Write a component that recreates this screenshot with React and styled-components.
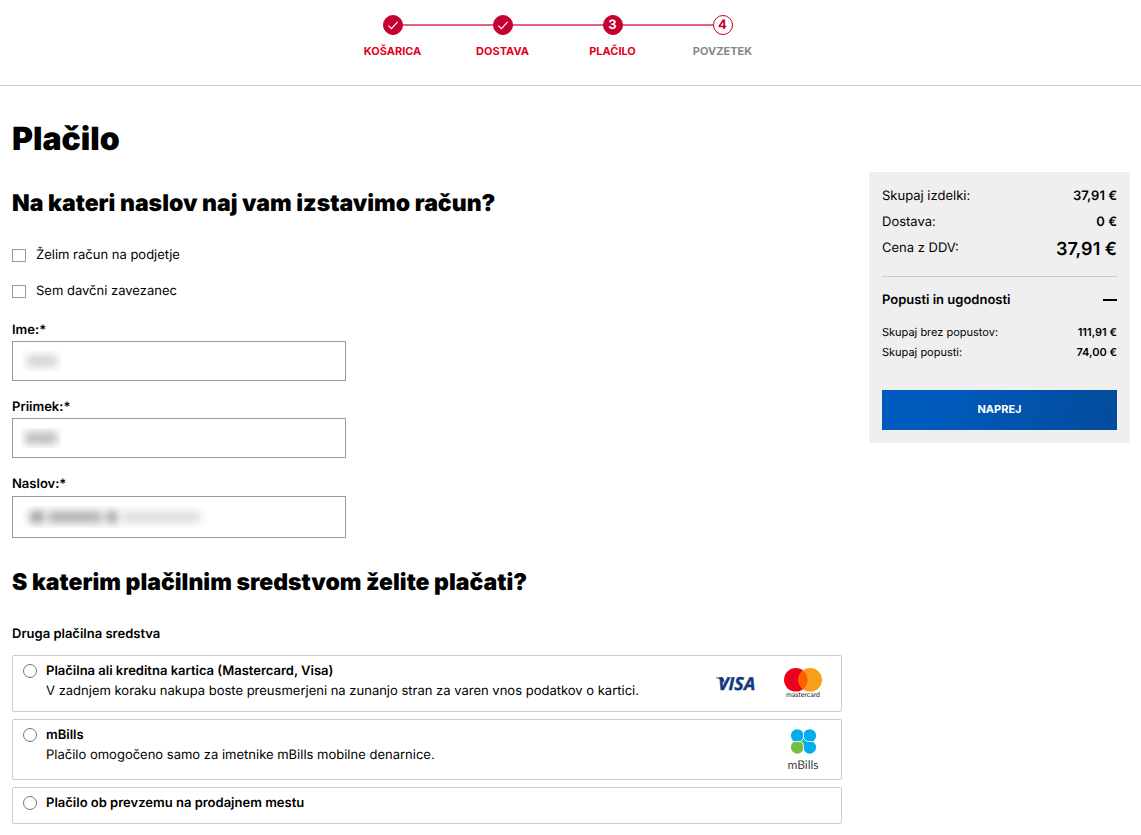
import React, { useState } from 'react';
import styled, { createGlobalStyle } from 'styled-components';

const steps = [
  { label: 'Košarica', state: 'done' },
  { label: 'Dostava', state: 'done' },
  { label: 'Plačilo', state: 'current' },
  { label: 'Povzetek', state: 'next' }
];

const fields = [
  { id: 'ime', label: 'Ime:*', left: 9, width: 41, marks: [{ width: 30, tone: '#d2d2d2' }] },
  { id: 'priimek', label: 'Priimek:*', left: 9, width: 40, marks: [{ width: 32, tone: '#bababa' }] },
  {
    id: 'naslov',
    label: 'Naslov:*',
    left: 11,
    width: 184,
    tall: true,
    marks: [
      { width: 14, tone: '#9a9a9a' },
      { width: 54, tone: '#b0b0b0' },
      { width: 12, tone: '#a2a2a2' },
      { width: 78, tone: '#dedede' }
    ]
  }
];

const payments = [
  {
    id: 'kartica',
    title: 'Plačilna ali kreditna kartica (Mastercard, Visa)',
    note: 'V zadnjem koraku nakupa boste preusmerjeni na zunanjo stran za varen vnos podatkov o kartici.',
    logos: [VisaLogo, MastercardLogo]
  },
  {
    id: 'mbills',
    title: 'mBills',
    note: 'Plačilo omogočeno samo za imetnike mBills mobilne denarnice.',
    logos: [MBillsLogo]
  },
  { id: 'prevzem', title: 'Plačilo ob prevzemu na prodajnem mestu', logos: [] }
];

export default function App() {
  const [payment, setPayment] = useState('');
  const [open, setOpen] = useState(true);

  return (
    <>
      <GlobalStyle />
      <Header>
        <Steps>
          {steps.map(({ label, state }, i) => (
            <Step key={label} $state={state}>
              <Bullet $state={state}>
                {state === 'done' ? <Check /> : i + 1}
              </Bullet>
              {label}
            </Step>
          ))}
        </Steps>
      </Header>
      <Page>
        <Title>Plačilo</Title>
        <Columns>
          <Form>
            <Heading>Na kateri naslov naj vam izstavimo račun?</Heading>
            <Options>
              <Option>
                <Checkbox type="checkbox" name="podjetje" />
                Želim račun na podjetje
              </Option>
              <Option>
                <Checkbox type="checkbox" name="zavezanec" />
                Sem davčni zavezanec
              </Option>
            </Options>
            <Fields>
              {fields.map(field => (
                <Field key={field.id}>
                  <Label htmlFor={field.id} $tall={field.tall}>
                    {field.label}
                  </Label>
                  <InputWrap>
                    <Input id={field.id} name={field.id} $tall={field.tall} />
                    <Masked $left={field.left} $width={field.width}>
                      {field.marks.map((mark, i) => (
                        <Mark key={i} $width={mark.width} $tone={mark.tone} />
                      ))}
                    </Masked>
                  </InputWrap>
                </Field>
              ))}
            </Fields>
            <Heading>S katerim plačilnim sredstvom želite plačati?</Heading>
            <Group>Druga plačilna sredstva</Group>
            <Payments>
              {payments.map(({ id, title, note, logos }) => (
                <Payment key={id}>
                  <Radio
                    type="radio"
                    name="payment"
                    checked={payment === id}
                    onChange={() => setPayment(id)}
                  />
                  <PaymentText>
                    <Strong>{title}</Strong>
                    {note && <span>{note}</span>}
                  </PaymentText>
                  <Logos>
                    {logos.map((Logo, i) => (
                      <Logo key={i} />
                    ))}
                  </Logos>
                </Payment>
              ))}
            </Payments>
          </Form>
          <Summary>
            <Line>
              <span>Skupaj izdelki:</span>
              <Strong>37,91 €</Strong>
            </Line>
            <Line>
              <span>Dostava:</span>
              <Strong>0 €</Strong>
            </Line>
            <Line>
              <span>Cena z DDV:</span>
              <Total>37,91 €</Total>
            </Line>
            <Toggle type="button" aria-expanded={open} onClick={() => setOpen(!open)}>
              Popusti in ugodnosti
              <Minus />
            </Toggle>
            {open && (
              <Discounts>
                <SmallLine>
                  <span>Skupaj brez popustov:</span>
                  <Strong>111,91 €</Strong>
                </SmallLine>
                <SmallLine>
                  <span>Skupaj popusti:</span>
                  <Strong>74,00 €</Strong>
                </SmallLine>
              </Discounts>
            )}
            <Submit type="button">Naprej</Submit>
          </Summary>
        </Columns>
      </Page>
    </>
  );
}

function Check() {
  return (
    <svg width="20" height="20" viewBox="0 0 20 20" fill="none" stroke="#fff" strokeWidth="1.2">
      <path d="M5.4 10.6 8.4 13.6 14.6 6.8" />
    </svg>
  );
}

function VisaLogo() {
  return (
    <svg width="44" height="28" viewBox="0 0 44 28" overflow="visible" role="img" aria-label="Visa">
      <path d="M4 7.500H9.500C11 7.500 11.600 8 11.800 9L13 14.500C11.500 11 8 8.700 4 8Z" fill="#15397f" />
      <text
        x="6"
        y="20"
        fill="#15397f"
        stroke="#15397f"
        strokeWidth="0.4"
        fontFamily="Open Sans, sans-serif"
        fontSize="18"
        fontWeight="700"
        fontStyle="italic">
        VISA
      </text>
    </svg>
  );
}

function MastercardLogo() {
  return (
    <svg width="38" height="31" viewBox="0 0 38 31" role="img" aria-label="Mastercard">
      <circle cx="11.8" cy="11.8" r="11.8" fill="#eb001b" />
      <circle cx="26.2" cy="11.8" r="11.8" fill="#f79e1b" />
      <path d="M19 2.450a11.800 11.800 0 0 1 0 18.700 11.800 11.800 0 0 1 0-18.700Z" fill="#ff5f00" />
      <text x="19" y="29" textAnchor="middle" fill="#222" fontFamily="Lato, sans-serif" fontSize="7">
        mastercard
      </text>
    </svg>
  );
}

function MBillsLogo() {
  return (
    <svg width="38" height="43" viewBox="0 0 38 43" role="img" aria-label="mBills">
      <g fill="#00aeef">
        <path d="M13.300 14A6.400 6.400 0 1 1 19.700 7.600V14Z" />
        <path d="M25.700 14A6.400 6.400 0 1 0 19.300 7.600V14Z" />
        <path d="M25.700 12.900A6.400 6.400 0 1 1 19.300 19.300V12.900Z" />
      </g>
      <path d="M13.300 12.900A6.400 6.400 0 1 0 19.700 19.300V12.900Z" fill="#72bf44" />
      <path
        d="M19.500 4.500V8.500Q19.200 13.500 14 13.500H10M19.500 8.500Q19.800 13.500 25 13.500H29M14 13.500Q19.500 13.200 19.500 19V22.500"
        fill="none"
        stroke="#fff"
        strokeWidth="0.8"
      />
      <text x="19" y="41" textAnchor="middle" fill="#444" fontFamily="Lato, sans-serif" fontSize="12">
        mBills
      </text>
    </svg>
  );
}

const GlobalStyle = createGlobalStyle`
  * {
    box-sizing: border-box;
  }

  body {
    margin: 0;
    background: #fff;
    color: #000;
    font: 400 13px/20px Inter, "Liberation Sans", sans-serif;
    text-rendering: geometricPrecision;
  }

  input, button {
    font: inherit;
    color: inherit;
    text-rendering: inherit;
  }
`;

const Header = styled.header`
  display: flex;
  justify-content: center;
  padding: 15px 26px 26px 0;
  border-bottom: 1px solid #ccc;
`;

const Steps = styled.ol`
  display: grid;
  grid-template-columns: repeat(4, 110px);
  margin: 0;
  padding: 0;
  list-style: none;
`;

const Step = styled.li`
  position: relative;
  display: flex;
  flex-direction: column;
  align-items: center;
  gap: 8px;
  color: ${({ $state }) => ($state === 'next' ? '#888' : '#e2001a')};
  font-size: 11px;
  font-weight: 700;
  line-height: 16px;
  text-transform: uppercase;

  /* connector that runs behind the bullets */
  &:not(:last-child)::after {
    content: '';
    position: absolute;
    top: 9px;
    left: 50%;
    width: 100%;
    height: 2px;
    background: #dc6680;
  }
`;

const Bullet = styled.span`
  position: relative;
  z-index: 1;
  display: flex;
  justify-content: center;
  align-items: center;
  width: 20px;
  height: 20px;
  border: 1px solid #c3002f;
  border-radius: 50%;
  background: ${({ $state }) => ($state === 'next' ? '#fff' : '#c3002f')};
  color: ${({ $state }) => ($state === 'next' ? '#c3002f' : '#fff')};
  font-size: 13px;

  svg {
    flex: none;
  }
`;

const Page = styled.main`
  padding: 33px 11px 11px 12px;
`;

const Title = styled.h1`
  margin: 0 0 13px;
  font-size: 32px;
  font-weight: 900;
  line-height: 40px;
`;

const Columns = styled.div`
  display: grid;
  grid-template-columns: minmax(0, 1fr) 261px;
  align-items: start;
  gap: 27px;
`;

const Form = styled.form`
  padding-top: 15px;
`;

const Heading = styled.h2`
  margin: 0 0 26px;
  font-size: 23px;
  font-weight: 900;
  line-height: 32px;
`;

const Options = styled.div`
  display: flex;
  flex-direction: column;
  align-items: flex-start;
  gap: 16px;
  margin-bottom: 19px;
`;

const Option = styled.label`
  display: flex;
  align-items: center;
  gap: 10px;
`;

const Checkbox = styled.input`
  appearance: none;
  width: 14px;
  height: 13px;
  margin: 0;
  border: 1px solid #999;

  &:checked {
    background: #c3002f;
  }
`;

const Fields = styled.div`
  display: flex;
  flex-direction: column;
  gap: 16px;
  max-width: 334px;
  margin-bottom: 28px;
`;

const Field = styled.div`
  display: flex;
  flex-direction: column;
`;

const Label = styled.label`
  margin-bottom: ${({ $tall }) => ($tall ? 2 : 1)}px;
  font-weight: 600;
`;

const InputWrap = styled.div`
  position: relative;
`;

const Input = styled.input`
  display: block;
  width: 100%;
  height: ${({ $tall }) => ($tall ? 42 : 40)}px;
  padding: 0 12px;
  border: 1px solid #999;
  border-radius: 0;
  background: #fff;
`;

const Masked = styled.span`
  position: absolute;
  inset: 10px auto 10px ${({ $left }) => $left}px;
  display: flex;
  justify-content: center;
  align-items: center;
  gap: 4px;
  width: ${({ $width }) => $width}px;
  overflow: hidden;
  pointer-events: none;
`;

const Mark = styled.span`
  width: ${({ $width }) => $width}px;
  height: 12px;
  background: ${({ $tone }) => $tone};
  filter: blur(4px);
`;

const Group = styled.h3`
  margin: 0 0 11px;
  font-size: 13px;
  font-weight: 600;
`;

const Payments = styled.div`
  display: flex;
  flex-direction: column;
  gap: 7px;
`;

const Payment = styled.label`
  display: flex;
  align-items: flex-start;
  gap: 9px;
  padding: 0 19px 0 10px;
  border: 1px solid #ccc;
  border-radius: 2px;
`;

const Radio = styled.input`
  width: 14px;
  height: 14px;
  margin: 8px 0 0;
`;

const PaymentText = styled.span`
  display: flex;
  flex: 1;
  flex-direction: column;
  padding: 5px 0 10px;
`;

const Logos = styled.span`
  display: flex;
  align-self: center;
  align-items: center;
  gap: 28px;
  padding: 8px 0;
`;

const Strong = styled.span`
  font-weight: 600;
`;

const Summary = styled.aside`
  display: flex;
  flex-direction: column;
  gap: 6px;
  padding: 14px 13px 13px;
  background: #efefef;
`;

const Line = styled.div`
  display: flex;
  justify-content: space-between;
`;

const SmallLine = styled(Line)`
  font-size: 11px;
`;

const Total = styled.span`
  font-size: 18px;
  font-weight: 600;
  line-height: 24px;
`;

const Toggle = styled.button`
  display: flex;
  justify-content: space-between;
  align-items: center;
  margin-top: 8px;
  padding: 13px 0 0;
  border: 0;
  border-top: 1px solid #ccc;
  background: none;
  font-weight: 600;
  cursor: pointer;
`;

const Minus = styled.span`
  width: 14px;
  height: 2px;
  background: #000;
`;

const Discounts = styled.div`
  padding: 6px 0 22px;
`;

const Submit = styled.button`
  height: 40px;
  padding: 0 0 2px;
  border: 0;
  background: linear-gradient(100deg, #005bbf 20%, #034c9b);
  color: #fff;
  font-size: 11px;
  font-weight: 700;
  text-transform: uppercase;
  cursor: pointer;
`;
